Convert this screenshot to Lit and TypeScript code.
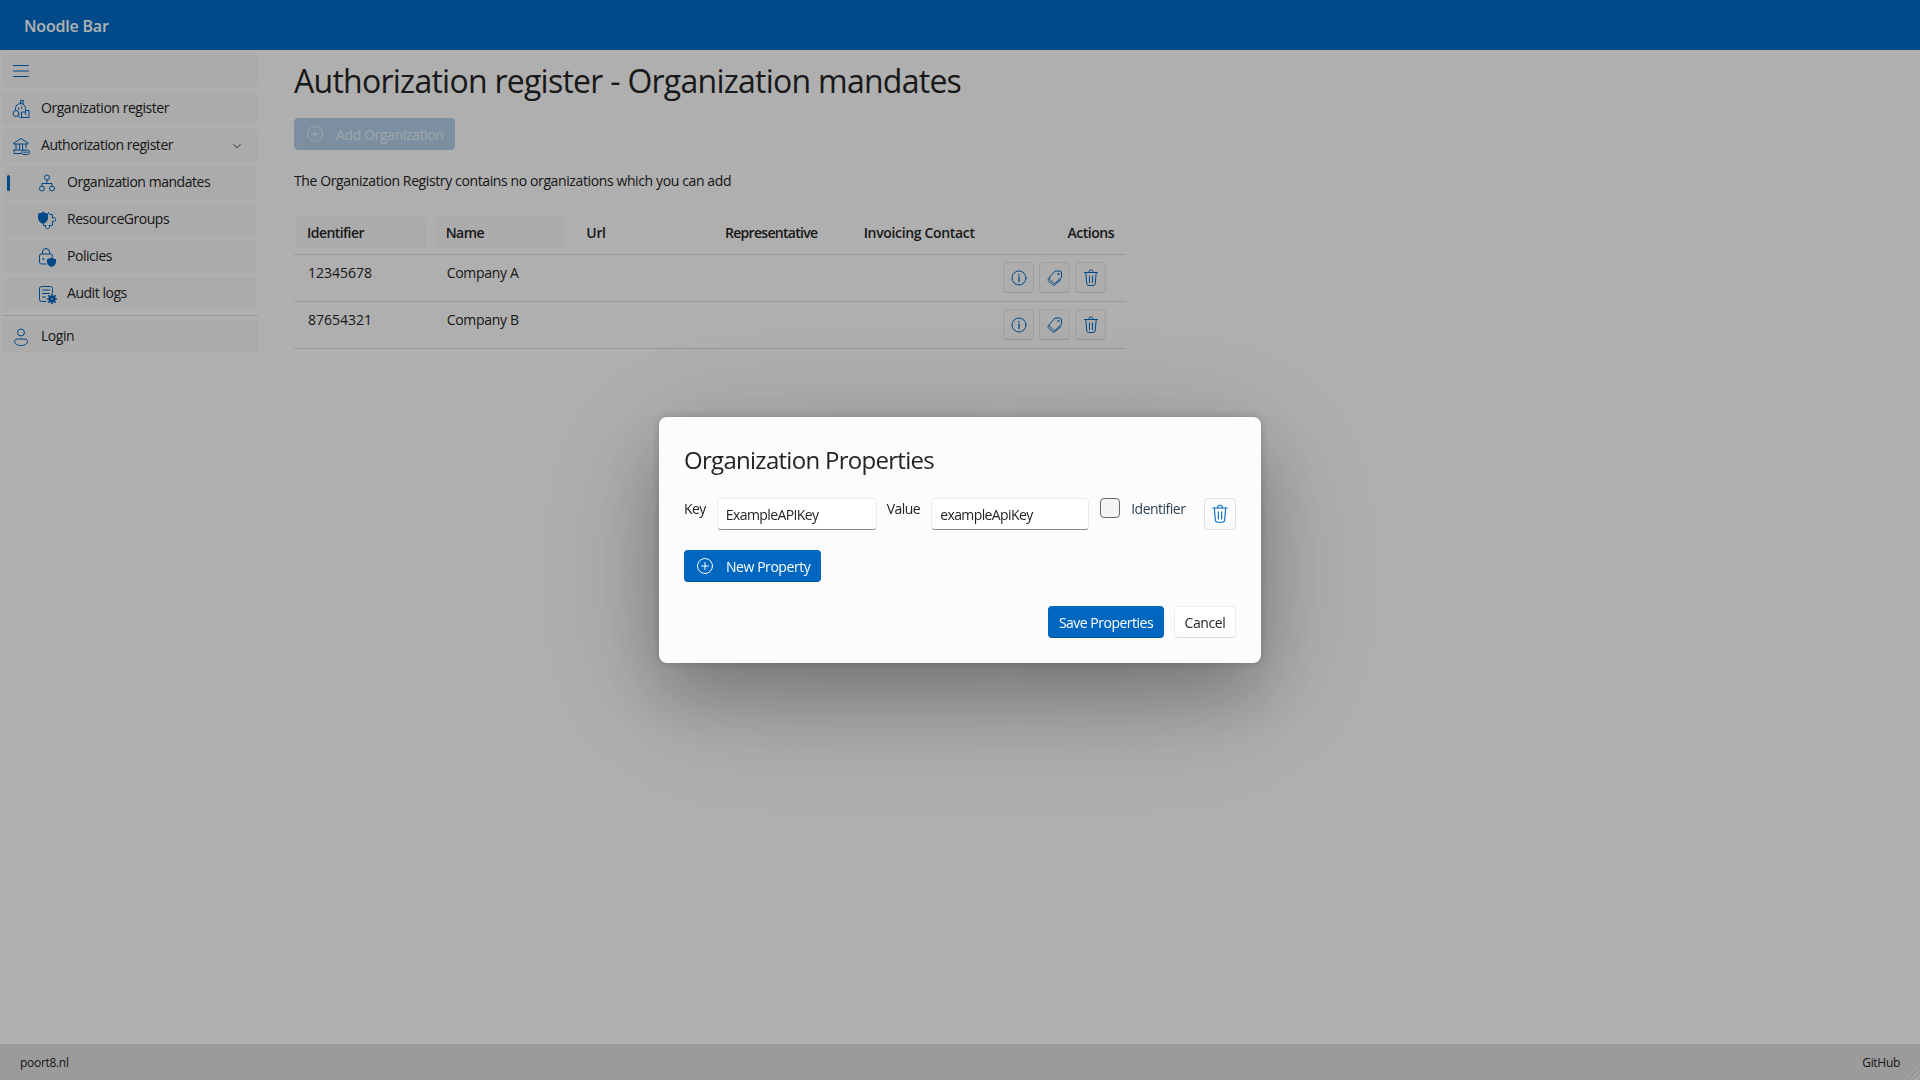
import {LitElement, html, css, svg} from 'lit';
import {customElement} from 'lit/decorators.js';

const icons = {
  menu: svg`<path d="M2.5 4.5h15M2.5 10h15M2.5 15.5h15"/>`,
  chevron: svg`<path d="M5.5 8l4.5 4.5L14.5 8"/>`,
  orgRegister: svg`<path d="M9.5 5V1.5h3.2L11.8 3l.9 1.2H9.5"/><path d="M4.5 11V9.5A5 5 0 0 1 14.5 9.5V11"/><path d="M7.5 9v1.5M10.5 8v1.5"/><path d="M10.5 18.5V13h4v-1.5h3.5v7h-7.5z"/><path d="M14.5 13v2.5"/><circle cx="5" cy="14.5" r="3"/><path d="M7.2 16.7l2.3 2.3"/>`,
  bank: svg`<path d="M3 7L10 2.5 17 7v1H3z"/><path d="M5 8.500v5M8.500 8.500v5M11.500 8.500v5M15 8.500v3"/><path d="M3 14h7"/><path d="M3 14v3.500h7"/><rect x="10.500" y="14" width="8" height="4.500" rx="2.200"/><path d="M12.500 16.200h4"/>`,
  org: svg`<circle cx="10" cy="4.5" r="2.5"/><circle cx="5" cy="15.5" r="2.5"/><circle cx="15" cy="15.5" r="2.5"/><path d="M10 7v3.5M5 13v-2.5h10V13"/>`,
  groups: svg`<path fill="currentColor" d="M1 3.5C3 3.5 5 2.5 6 1.5 7 2.5 9 3.5 11 3.5V8c0 3-2.5 5-5 6-2.500-1-5-3-5-6z" stroke="none"/><path d="M11.500 2.500l1 2h3v3.500l2-.5c1.500 0 1.500 4 0 4l-2-.5v4.500h-3.500l.5 2c0 1.500-4 1.500-4 0l.5-2H6.500v-1"/>`,
  policy: svg`<path d="M5.500 7V5a3.500 3.500 0 0 1 7 0v2"/><path d="M9 17H4.500A2 2 0 0 1 2.500 15V9a2 2 0 0 1 2-2h9a2 2 0 0 1 2 2v1"/><circle cx="6.500" cy="12" r="1" fill="currentColor" stroke="none"/><path fill="currentColor" stroke="none" d="M10 12c1.500 0 3-.7 4.500-1.500 1.500.8 3 1.500 4.500 1.500v3c0 2.500-2 4-4.500 5-2.500-1-4.500-2.500-4.500-5z"/>`,
  audit: svg`<path d="M9 17.500H4.500a2 2 0 0 1-2-2v-11a2 2 0 0 1 2-2h9a2 2 0 0 1 2 2V9"/><path d="M5.500 6h7M5.500 9.500h7M5.500 13h3"/><circle cx="15" cy="15" r="3.600" fill="currentColor" stroke="none"/><path stroke-width="1.600" d="M15 10.400v9.200M10.400 15h9.200M11.800 11.800l6.400 6.400M18.200 11.800l-6.400 6.400"/><circle cx="15" cy="15" r="1.100" fill="#aeaeae" stroke="none"/>`,
  person: svg`<circle cx="10" cy="5.500" r="3.500"/><path d="M3.500 14.500c0-1.500 1.200-2.500 2.500-2.500h8c1.300 0 2.500 1 2.500 2.500 0 2.800-3.200 4-6.500 4s-6.500-1.200-6.500-4z"/>`,
  add: svg`<circle cx="10" cy="10" r="7.500"/><path d="M10 6.500v7M6.500 10h7"/>`,
  info: svg`<circle cx="10" cy="10" r="7"/><path stroke-width="1.300" d="M10 9v4.500"/><circle cx="10" cy="6.700" r=".8" fill="currentColor" stroke="none"/>`,
  tags: svg`<path d="M10.500 3h4a2 2 0 0 1 2 2V9L10.500 15a1.500 1.500 0 0 1-2.100 0l-3.800-3.800a1.500 1.500 0 0 1 0-2.100z"/><circle cx="13.500" cy="6" r="1" fill="currentColor" stroke="none"/><path d="M3.500 10.500c-.6.800-.6 1.700 0 2.400l3.500 3.500c.9.900 2.200.9 3 .2l6-5.100"/>`,
  trash: svg`<path d="M3.500 4.500h13"/><path d="M8 4.500V3.800A1.800 1.800 0 0 1 9.800 2h.4A1.800 1.800 0 0 1 12 3.800v.7"/><path d="M4.800 4.500l1 11.300a2 2 0 0 0 2 1.700h4.400a2 2 0 0 0 2-1.700l1-11.300"/><path d="M8.500 8v6.500M11.500 8v6.500"/>`,
};

type IconName = keyof typeof icons;

function icon(name: IconName, size = 20) {
  return html`<svg class="icon" width=${size} height=${size} viewBox="0 0 20 20" fill="none" stroke="currentColor" stroke-width="1" stroke-linecap="round" stroke-linejoin="round">${icons[name]}</svg>`;
}

const subItems: {label: string; icon: IconName; active?: boolean}[] = [
  {label: 'Organization mandates', icon: 'org', active: true},
  {label: 'ResourceGroups', icon: 'groups'},
  {label: 'Policies', icon: 'policy'},
  {label: 'Audit logs', icon: 'audit'},
];

const columns = ['Identifier', 'Name', 'Url', 'Representative', 'Invoicing Contact'];

const rows = [
  {id: '12345678', name: 'Company A'},
  {id: '87654321', name: 'Company B'},
];

@customElement('app-root')
export class AppRoot extends LitElement {
  static styles = css`
    :host {
      display: flex;
      flex-direction: column;
      height: 100vh;
      overflow: hidden;
      background: #fbfbfb;
      color: #242424;
      font-family: 'Open Sans', 'Noto Sans', sans-serif;
      font-size: 14px;
      line-height: 22px;
      letter-spacing: -0.39px;
      white-space: nowrap;
    }

    .icon {
      display: block;
      flex: none;
    }

    .header {
      flex: none;
      height: 50px;
      display: flex;
      align-items: center;
      padding: 2px 24px 0;
      box-sizing: border-box;
      background: #006bc4;
      color: #fff;
      font-size: 16px;
      font-weight: 600;
      letter-spacing: -0.2px;
    }

    .body {
      flex: 1;
      display: flex;
      min-height: 0;
    }

    .nav {
      flex: none;
      width: 260px;
      box-sizing: border-box;
      padding: 5px 2px 0;
      display: flex;
      flex-direction: column;
      gap: 4px;
      letter-spacing: -0.46px;
    }

    .nav-item {
      height: 33px;
      box-sizing: border-box;
      display: flex;
      align-items: center;
      gap: 10px;
      padding-left: 9px;
      border-radius: 4px;
      background: #f5f5f5;
      position: relative;
    }

    .nav-item span {
      margin-bottom: 2px;
    }

    .nav-item .icon {
      color: #0067c0;
    }

    .nav-item.toggle {
      height: 32px;
      margin-bottom: 1px;
    }

    .nav-item .chevron {
      margin-left: auto;
      margin-right: 14px;
      color: #333;
    }

    .nav-item.sub {
      margin: 0 2px;
      padding-left: 33px;
    }

    .nav-item.active::before {
      content: '';
      position: absolute;
      left: 3px;
      top: 9px;
      width: 3px;
      height: 16px;
      border-radius: 2px;
      background: #0067c0;
    }

    .nav hr {
      border: 0;
      height: 1px;
      margin: 1px 0 0;
      background: #dcdcdc;
    }

    .main {
      flex: 1;
      padding: 11px 0 0 34px;
      min-width: 0;
    }

    h1 {
      margin: 0 0 17px;
      font-size: 32px;
      line-height: 40px;
      font-weight: 400;
      letter-spacing: -0.74px;
    }

    .btn {
      display: inline-flex;
      align-items: center;
      box-sizing: border-box;
      height: 32px;
      gap: 11px;
      padding: 1px 10px 0;
      border-radius: 4px;
      border: 1px solid #d4d4d4;
      background: #fff;
      color: #242424;
      font: inherit;
      letter-spacing: inherit;
    }

    .btn .icon {
      margin-top: -1px;
    }

    .btn.primary {
      background: #0067c0;
      border-color: #0067c0;
      border-bottom-color: #00549e;
      color: #fff;
    }

    .btn.text-only {
      justify-content: center;
      padding: 2px 0 0;
    }

    .btn.add {
      width: 137px;
    }

    .btn.disabled {
      width: 161px;
      background: #b0cde5;
      border-color: #b0cde5;
      color: #e4edf5;
    }

    .main p {
      margin: 20px 0 24px;
      letter-spacing: -0.385px;
    }

    .table {
      width: 832px;
    }

    .tr {
      display: grid;
      grid-template-columns: repeat(6, 1fr);
      border-bottom: 1px solid #dcdcdc;
    }

    .tr.head {
      height: 38px;
      font-weight: 600;
      letter-spacing: -0.34px;
    }

    .th {
      height: 31px;
      margin: 1px 0 0 2px;
      width: 130px;
      padding-left: 11px;
      box-sizing: border-box;
      display: flex;
      align-items: center;
      border-radius: 4px;
    }

    .th.filled {
      background: #f5f5f5;
      letter-spacing: -0.55px;
    }

    .th.plain {
      margin-left: 0;
      padding-left: 15px;
    }

    .th.narrow {
      letter-spacing: -0.7px;
    }

    .th.actions {
      margin-left: 0;
      width: auto;
      padding-right: 12px;
      justify-content: flex-end;
      letter-spacing: -0.5px;
    }

    .tr.row {
      padding-top: 7px;
      height: 39px;
      box-sizing: content-box;
      letter-spacing: -0.3px;
    }

    .td {
      padding-left: 14px;
    }

    .td.num {
      letter-spacing: 0;
    }

    .td.actions {
      grid-column: 6;
      display: flex;
      justify-content: flex-end;
      gap: 5px;
      padding-right: 20px;
    }

    .icon-btn {
      width: 31px;
      height: 31px;
      box-sizing: border-box;
      padding: 0;
      display: flex;
      align-items: center;
      justify-content: center;
      border-radius: 4px;
      border: 1px solid #e6e6e6;
      border-bottom-color: #d2d2d2;
      background: #f8f8f8;
      color: #0067c0;
    }

    .footer {
      flex: none;
      height: 36px;
      display: flex;
      justify-content: space-between;
      align-items: center;
      padding: 2px 20px 0;
      box-sizing: border-box;
      background: #dfdfdf;
      font-size: 12px;
      letter-spacing: -0.3px;
    }

    .grip {
      position: absolute;
      right: 0;
      bottom: 0;
      width: 16px;
      height: 16px;
      background: repeating-linear-gradient(135deg, transparent 0 3px, #ffffff30 3px 4px);
      clip-path: polygon(100% 0, 100% 100%, 0 100%);
    }

    .overlay {
      position: fixed;
      inset: 0;
      display: flex;
      align-items: center;
      justify-content: center;
      background: rgba(0, 0, 0, 0.3);
    }

    .dialog {
      width: 602px;
      height: 246px;
      box-sizing: border-box;
      padding: 27px 25px 0;
      border-radius: 8px;
      background: #fcfcfc;
      box-shadow: 0 0 8px rgba(0, 0, 0, 0.2), 0 32px 64px rgba(0, 0, 0, 0.2), 0 32px 140px rgba(0, 0, 0, 0.22);
      display: flex;
      flex-direction: column;
    }

    h2 {
      margin: 0 0 22px;
      font-size: 24px;
      line-height: 32px;
      font-weight: 400;
      letter-spacing: -0.71px;
    }

    .prop-row {
      display: flex;
      align-items: flex-start;
      height: 32px;
    }

    .prop-row label {
      display: block;
      flex: none;
      letter-spacing: -0.55px;
    }

    input.text {
      flex: none;
      height: 32px;
      box-sizing: border-box;
      padding: 1px 8px 0;
      border: 1px solid #ececec;
      border-bottom-color: #8a8a8a;
      border-radius: 4px;
      background: #fff;
      color: #242424;
      font: inherit;
      letter-spacing: -0.6px;
      outline: none;
    }

    input.key {
      width: 160px;
      margin: 0 10px 0 11px;
    }

    input.value {
      width: 158px;
      margin: 0 11px 0 11px;
    }

    .check {
      appearance: none;
      flex: none;
      width: 20px;
      height: 20px;
      box-sizing: border-box;
      margin: 0 11px 0 0;
      border: 1px solid #6a6a6a;
      border-radius: 4px;
      background: #f3f3f3;
    }

    .prop-row label.identifier {
      width: 73px;
      color: #2a3f52;
      letter-spacing: -0.5px;
    }

    .dialog .icon-btn {
      flex: none;
      width: 32px;
      height: 32px;
      background: #fcfcfc;
      border-color: #e0e0e0;
    }

    .new-prop {
      margin-top: 20px;
    }

    .new-prop .btn {
      letter-spacing: -0.44px;
    }

    .dialog-actions {
      display: flex;
      justify-content: flex-end;
      gap: 10px;
      margin-top: 24px;
    }

    .btn.save {
      width: 116px;
      letter-spacing: -0.5px;
    }

    .btn.cancel {
      width: 62px;
      border-color: #ececec;
      border-bottom-color: #dcdcdc;
    }
  `;

  render() {
    return html`
      <div class="header">Noodle Bar</div>
      <div class="body">
        <nav class="nav">
          <div class="nav-item toggle">${icon('menu')}</div>
          <div class="nav-item">${icon('orgRegister')}<span>Organization register</span></div>
          <div class="nav-item">
            ${icon('bank')}<span>Authorization register</span>
            <svg class="icon chevron" width="14" height="14" viewBox="0 0 20 20" fill="none" stroke="currentColor" stroke-width="1.400" stroke-linecap="round" stroke-linejoin="round">${icons.chevron}</svg>
          </div>
          ${subItems.map(
            (item) => html`<div class="nav-item sub ${item.active ? 'active' : ''}">${icon(item.icon)}<span>${item.label}</span></div>`
          )}
          <hr />
          <div class="nav-item">${icon('person')}<span>Login</span></div>
        </nav>
        <main class="main">
          <h1>Authorization register - Organization mandates</h1>
          <div class="btn disabled">${icon('add')}<span>Add Organization</span></div>
          <p>The Organization Registry contains no organizations which you can add</p>
          <div class="table">
            <div class="tr head">
              ${columns.map(
                (col, i) => html`<div class="th ${i < 2 ? 'filled' : 'plain'} ${i === 3 ? 'narrow' : ''}">${col}</div>`
              )}
              <div class="th actions">Actions</div>
            </div>
            ${rows.map(
              (row) => html`
                <div class="tr row">
                  <div class="td num">${row.id}</div>
                  <div class="td">${row.name}</div>
                  <div class="td actions">
                    <button class="icon-btn">${icon('info', 20)}</button>
                    <button class="icon-btn">${icon('tags', 20)}</button>
                    <button class="icon-btn">${icon('trash', 20)}</button>
                  </div>
                </div>
              `
            )}
          </div>
        </main>
      </div>
      <div class="footer"><span>poort8.nl</span><span>GitHub</span></div>
      <div class="overlay">
        <div class="dialog">
          <h2>Organization Properties</h2>
          <div class="prop-row">
            <label>Key</label>
            <input class="text key" .value=${'ExampleAPIKey'} />
            <label>Value</label>
            <input class="text value" .value=${'exampleApiKey'} />
            <input class="check" type="checkbox" />
            <label class="identifier">Identifier</label>
            <button class="icon-btn">${icon('trash', 22)}</button>
          </div>
          <div class="new-prop">
            <div class="btn primary add">${icon('add')}<span>New Property</span></div>
          </div>
          <div class="dialog-actions">
            <div class="btn primary text-only save">Save Properties</div>
            <div class="btn text-only cancel">Cancel</div>
          </div>
        </div>
      </div>
      <div class="grip"></div>
    `;
  }
}
